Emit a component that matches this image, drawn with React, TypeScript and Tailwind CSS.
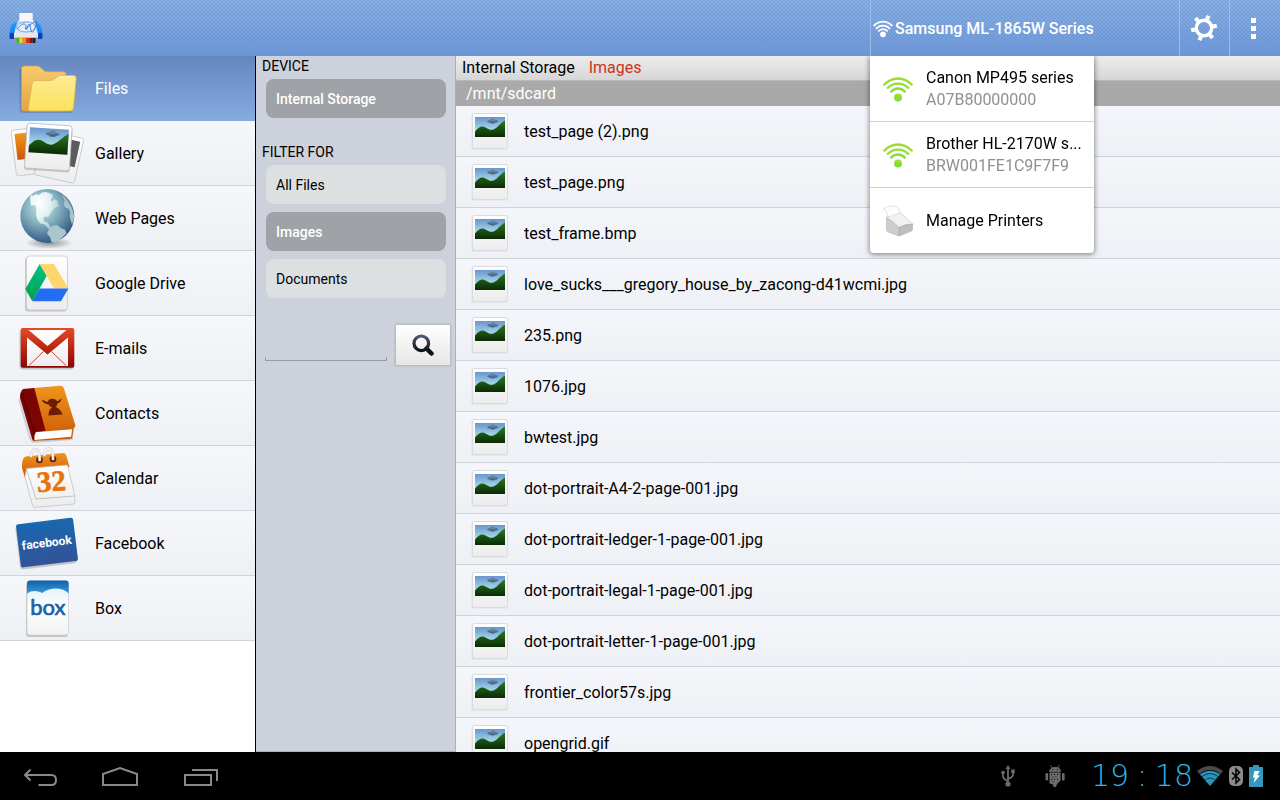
import React, { useState } from 'react';

interface IconProps {
  className?: string;
}

interface MenuEntry {
  id: string;
  label: string;
  icon: React.ReactNode;
}

interface Printer {
  name: string;
  serial: string;
}

// Gradients shared by all of the drawings below
function Gradients() {
  return (
    <svg className="absolute h-0 w-0" aria-hidden="true">
      <defs>
        <linearGradient id="g-sky" x1="0" y1="0" x2="0" y2="1">
          <stop offset="0" stopColor="#6a95cf" />
          <stop offset="0.65" stopColor="#a5dbe8" />
        </linearGradient>
        <linearGradient id="g-hill" x1="0" y1="0" x2="0" y2="1">
          <stop offset="0" stopColor="#2a7a22" />
          <stop offset="1" stopColor="#0b2a04" />
        </linearGradient>
        <linearGradient id="g-paper" x1="0" y1="0" x2="0" y2="1">
          <stop offset="0" stopColor="#ffffff" />
          <stop offset="1" stopColor="#ececec" />
        </linearGradient>
        <linearGradient id="g-folder-back" x1="0" y1="0" x2="0" y2="1">
          <stop offset="0" stopColor="#f6cd6c" />
          <stop offset="1" stopColor="#e7a148" />
        </linearGradient>
        <linearGradient id="g-folder-front" x1="0" y1="0" x2="0" y2="1">
          <stop offset="0" stopColor="#fdeb94" />
          <stop offset="1" stopColor="#fae35c" />
        </linearGradient>
        <linearGradient id="g-orange" x1="0" y1="0" x2="0" y2="1">
          <stop offset="0" stopColor="#ee961c" />
          <stop offset="1" stopColor="#cc5608" />
        </linearGradient>
        <linearGradient id="g-red" x1="0" y1="0" x2="0" y2="1">
          <stop offset="0" stopColor="#e64a26" />
          <stop offset="1" stopColor="#8b0500" />
        </linearGradient>
        <linearGradient id="g-green" x1="0" y1="0" x2="0" y2="1">
          <stop offset="0" stopColor="#00c28a" />
          <stop offset="1" stopColor="#00a049" />
        </linearGradient>
        <linearGradient id="g-facebook" x1="0" y1="0" x2="0" y2="1">
          <stop offset="0" stopColor="#1868b0" />
          <stop offset="1" stopColor="#325297" />
        </linearGradient>
        <linearGradient id="g-box" x1="0" y1="0" x2="0" y2="1">
          <stop offset="0" stopColor="#0c62ad" />
          <stop offset="1" stopColor="#3a9ad6" />
        </linearGradient>
        <linearGradient id="g-cloud" x1="0" y1="0" x2="0" y2="1">
          <stop offset="0" stopColor="#d8ecf3" />
          <stop offset="0.5" stopColor="#ffffff" />
          <stop offset="1" stopColor="#f1f1f1" />
        </linearGradient>
        <linearGradient id="g-signal" x1="0" y1="0" x2="0" y2="1">
          <stop offset="0" stopColor="#addd2c" />
          <stop offset="1" stopColor="#6fdc45" />
        </linearGradient>
        <linearGradient id="g-lens" x1="0" y1="0" x2="0" y2="1">
          <stop offset="0" stopColor="#4a5c6c" />
          <stop offset="1" stopColor="#0a0f14" />
        </linearGradient>
        <linearGradient id="g-blue-side" x1="0" y1="0" x2="0" y2="1">
          <stop offset="0" stopColor="#1c9dff" />
          <stop offset="0.6" stopColor="#1587f2" />
          <stop offset="0.7" stopColor="#0b3fb4" />
        </linearGradient>
        <radialGradient id="g-globe" cx="0.4" cy="0.33" r="0.7">
          <stop offset="0" stopColor="#c7ebe8" />
          <stop offset="0.45" stopColor="#84b0bf" />
          <stop offset="1" stopColor="#2c5580" />
        </radialGradient>
        <radialGradient id="g-land" cx="0.3" cy="0.3" r="0.8">
          <stop offset="0" stopColor="#ffffff" />
          <stop offset="0.5" stopColor="#e3f2f1" />
          <stop offset="1" stopColor="#a5c6cc" />
        </radialGradient>
        <radialGradient id="g-shadow">
          <stop offset="0" stopColor="#000" stopOpacity="0.4" />
          <stop offset="1" stopColor="#000" stopOpacity="0" />
        </radialGradient>
      </defs>
    </svg>
  );
}

// 30x20 picture of hills under a flying saucer
function Landscape() {
  return (
    <g>
      <rect width="30" height="20" fill="url(#g-sky)" />
      <path
        d="M0 14.500C4 9.500 7 8.600 10 10.200c3 1.600 4.500 3 7.500 2.600C22 12 25 6 30 3.500V20H0z"
        fill="url(#g-hill)"
      />
      <ellipse cx="17.700" cy="4.300" rx="5.400" ry="1.500" fill="#53708f" />
      <ellipse cx="17.700" cy="3" rx="2.600" ry="1.500" fill="#6482a0" />
      <ellipse cx="17.700" cy="5.600" rx="2.600" ry="0.900" fill="#466382" />
    </g>
  );
}

function EntryIcon({ children }: { children: React.ReactNode }) {
  return (
    <svg width="95" height="64" viewBox="0 0 95 64" className="shrink-0" aria-hidden="true">
      {children}
    </svg>
  );
}

function FolderIcon() {
  return (
    <EntryIcon>
      <path d="M20.500 13v40q0 3 3 3H72" fill="none" stroke="#000" strokeOpacity="0.15" strokeWidth="2" />
      <path
        d="M21.500 13q0-3 3-3H37q2 0 3.500 1.500l3 2.700q1.500 1.500 3.500 1.500h16q3 0 3 3V52q0 3-3 3H24.500q-3 0-3-3z"
        fill="url(#g-folder-back)"
        stroke="#dc9c3f"
        strokeWidth="0.800"
      />
      <path
        d="M32 28q.3-3 3-3h15q2 0 3.500-1.200l4-3Q59.500 19.500 61 19.500h12.500q3 0 2.700 3L73.500 52q-.4 3-3 3H30q-2 0-1.700-3z"
        fill="url(#g-folder-front)"
        stroke="#dfb13c"
        strokeWidth="0.800"
      />
      <path d="M33 27q.5-1.200 2-1.200h15.500q2 0 3.500-1.200l4-3q1.500-1.200 3-1.200h12.500" fill="none" stroke="#fff7c0" strokeWidth="0.700" />
    </EntryIcon>
  );
}

function GalleryIcon() {
  return (
    <EntryIcon>
      <g transform="translate(11 9.500) rotate(-7)">
        <rect width="40" height="46" rx="2.500" fill="url(#g-paper)" stroke="#c6c8ca" strokeWidth="0.900" />
        <rect x="3" y="4" width="30" height="26" fill="url(#g-orange)" />
      </g>
      <g transform="translate(44 8.700) rotate(12.500)">
        <rect width="41" height="46" rx="2.500" fill="url(#g-paper)" stroke="#c6c8ca" strokeWidth="0.900" />
        <rect x="8" y="4" width="30" height="26" fill="#5d5960" />
      </g>
      <g transform="translate(27.300 2) rotate(3.700)">
        <rect x="-0.500" y="0.800" width="46" height="46" rx="3" fill="#000" fillOpacity="0.180" />
        <rect width="45" height="45" rx="2.500" fill="url(#g-paper)" stroke="#bfc3c6" strokeWidth="0.900" />
        <g transform="translate(3 4) scale(1.300 1.260)">
          <Landscape />
        </g>
      </g>
    </EntryIcon>
  );
}

function GlobeIcon() {
  return (
    <EntryIcon>
      <ellipse cx="49" cy="57" rx="24" ry="6" fill="url(#g-shadow)" />
      <circle cx="47.300" cy="30" r="27" fill="url(#g-globe)" />
      <path
        d="M30 12l1-3 3 1 1-2 4 1 3-2.500 4-.5 3 1 3.500 1.500.5 2.500-2 2.500 1 2.500 2-3 3 1.500 1 3 .5 3-4 1.500-2 3-2.500 3-1.500 3-3-.5-2 1.500.5 3.500 3 .5 1.500 2 2 3 2.500 2-1 .8-4-1.800-3.500-3.500-4-1-3-3.500-1.500-5 .5-6-1.500-4-4 1z"
        fill="url(#g-land)"
      />
      <path
        d="M49.500 42l3.500-2.500 4.500-.2 3.500 3 4 1.500 1.500 3.500-3 3-3.500 3.500-2.500 2-3 .8-3-.5-1.500-5-3-3.500z"
        fill="#a8c6cb"
      />
      <path
        d="M62 9l3.500 3 2.500 3.500 3 4.500 2 5 1 5-.3 5-1.700 3-1.500-4-.8-4 .5-4-2-3.500-3-1-1.500-3.500 1-3.500z"
        fill="#a5c3c8"
      />
    </EntryIcon>
  );
}

function DriveIcon() {
  return (
    <EntryIcon>
      <rect x="25" y="6.500" width="42" height="54" rx="3" fill="#000" fillOpacity="0.180" />
      <rect x="26.500" y="5" width="41" height="54" rx="3" fill="url(#g-paper)" stroke="#c9ccd0" strokeWidth="0.900" />
      <path d="M39.700 13l7 12-14.400 25.300L25.300 38z" fill="url(#g-green)" />
      <path d="M39.700 13H54l14.400 24.500H54z" fill="#ffd66e" />
      <path d="M39.500 37.500h28.900L61 50.300H32.300z" fill="#216ef5" />
    </EntryIcon>
  );
}

function MailIcon() {
  return (
    <EntryIcon>
      <rect x="19.500" y="13.500" width="54" height="40" rx="3" fill="#000" fillOpacity="0.180" />
      <rect x="20.700" y="12" width="53.600" height="39.700" rx="2" fill="url(#g-red)" />
      <path d="M28.500 14h38L47.500 30z" fill="#fbfbfb" />
      <path d="M27 21.500L47.500 38.500 68 21.500V50H27z" fill="url(#g-paper)" />
      <path d="M43.500 35.500L29 49.500M51.500 35.500L66 49.500" stroke="#b93329" strokeWidth="0.900" fill="none" />
    </EntryIcon>
  );
}

function ContactsIcon() {
  return (
    <EntryIcon>
      <path d="M19 18l11 39 3 4 40-3" fill="none" stroke="#000" strokeOpacity="0.150" strokeWidth="2" />
      <path d="M34 7l26-2.200q3-.2 4 3L75.300 44q.5 2-1.500 3L72.500 56q-.5 2-2.500 2l-37 2-1-9z" fill="url(#g-orange)" />
      <path d="M35 51.300l37-3-.8 7.500L34 59z" fill="#ffffff" />
      <path
        d="M20 17q-.3-6 3-9l11.300-1L45.500 49.700 35.500 51q-1.800 3-1 8.800-1.500.2-2.500-2z"
        fill="#7c0503"
      />
      <path d="M22 12l13 41" stroke="#4d0000" strokeWidth="2" fill="none" strokeOpacity="0.600" />
      <path
        d="M41.500 18.500l6 2.500q1-3 4.500-3.300 3.500-.3 5.500 2.500l4-2.700q-.5 4-4 5-.5 2.500-2 3.500 5 1.500 7 7.500l-14 1q0-6 3.500-8-2.500-1-3.500-3-5-.5-7-5z"
        fill="#6d1c04"
      />
    </EntryIcon>
  );
}

function CalendarIcon() {
  return (
    <EntryIcon>
      <path d="M26 23l8 30-.7 8.300L25 31.500z" fill="#dadada" />
      <path d="M22 22q-.5-10 3.500-11.500L63 7q2.500 0 3.500 3l3 11L27 24l-2 8z" fill="url(#g-orange)" />
      <path d="M26.500 22.500l41-3.500L74.800 50v6q0 2-2 2.200L35 61.300q-2 0-2.500-2L25 31z" fill="url(#g-paper)" stroke="#bcbcbc" strokeWidth="0.700" />
      <path d="M26.500 23l9.500 30 38.500-3" fill="none" stroke="#bdbdbd" strokeWidth="0.900" />
      <circle cx="39.500" cy="14" r="3.300" fill="#6b1c05" />
      <circle cx="53" cy="13" r="3.300" fill="#6b1c05" />
      <path d="M31 10c1-9 9-10 8.700 4M44.500 9c1-9 9-9 8.500 4" fill="none" stroke="#c6c6c6" strokeWidth="3" strokeLinecap="round" />
      <path d="M31 10c1-9 9-10 8.700 4M44.500 9c1-9 9-9 8.500 4" fill="none" stroke="#f5f5f5" strokeWidth="2" strokeLinecap="round" />
      <text
        x="52"
        y="45"
        textAnchor="middle"
        transform="rotate(-4 52 45)"
        fontFamily="'Liberation Serif', serif"
        fontWeight="700"
        fontSize="29"
        stroke="#e5740f"
        strokeWidth="0.600"
        fill="#e5740f"
      >
        32
      </text>
    </EntryIcon>
  );
}

function FacebookIcon() {
  return (
    <EntryIcon>
      <g transform="translate(15.800 13.500) rotate(-7)">
        <rect x="-1" y="1.500" width="57.500" height="44" rx="3" fill="#000" fillOpacity="0.180" />
        <rect width="57.500" height="43.500" rx="2.500" fill="url(#g-facebook)" />
        <text
          x="28.500"
          y="26"
          textAnchor="middle"
          fontFamily="Roboto, sans-serif"
          fontWeight="700"
          fontSize="12"
          fill="#ffffff"
        >
          facebook
        </text>
      </g>
    </EntryIcon>
  );
}

function BoxIcon() {
  return (
    <EntryIcon>
      <rect x="26" y="6" width="42" height="55" rx="3" fill="#000" fillOpacity="0.180" />
      <rect x="27" y="5" width="41.500" height="54" rx="3" fill="url(#g-cloud)" stroke="#c9ccd0" strokeWidth="0.700" />
      <path d="M27 17.500V7.500q0-3 3-3h35.700q3 0 3 3v10q-5-5-13-5-8 0-13.500 4.500Q34 13 27 17.500z" fill="url(#g-box)" />
      <text
        x="47.800"
        y="39"
        textAnchor="middle"
        fontFamily="Lato, sans-serif"
        fontSize="22"
        stroke="#1763ab"
        strokeWidth="0.700"
        fill="#1763ab"
      >
        box
      </text>
    </EntryIcon>
  );
}

function LogoIcon() {
  return (
    <svg width="34" height="30" viewBox="0 0 34 30" aria-hidden="true">
      <path d="M9 9Q1.500 9 .5 20v4.500q0 1.500 1.500 1.500h6z" fill="url(#g-blue-side)" />
      <path d="M25 9q7.500 0 8.500 11v4.500q0 1.500-1.500 1.500h-6z" fill="url(#g-blue-side)" />
      <path d="M9.500 7.500h15l2 4L29 21H5l2.500-9.500z" fill="#dfe6ee" />
      <path d="M10.300 0h13.400v8H10.300z" fill="#f8f8f8" />
      <path d="M5 20h24v5q0 1-1 1H6q-1 0-1-1z" fill="#e8e8e8" />
      <path d="M5 24.500h24v.5q0 1-1 1H6q-1 0-1-1z" fill="#9a9a9a" />
      <ellipse cx="17" cy="14" rx="9.500" ry="5" fill="#e4eefb" stroke="#5b90e0" strokeWidth="0.800" />
      <path d="M8.500 16q4-6 7-5t1 4 6-4 4 3-5 1-4 2" fill="none" stroke="#3b78d8" strokeWidth="0.900" />
      <path d="M7.500 25h3v5h-3z" fill="#49b51c" />
      <path d="M10.500 25h3v5h-3z" fill="#e6e02a" />
      <path d="M13.500 25H17v5h-3.500z" fill="#f08a18" />
      <path d="M17 25h3.500v5H17z" fill="#d92b12" />
      <path d="M20.500 25h3v5h-3z" fill="#8c1410" />
      <path d="M23.500 25h3v5h-3z" fill="#222" />
    </svg>
  );
}

function SignalIcon({ className }: IconProps) {
  return (
    <svg viewBox="0 0 30 26" className={className} fill="none" stroke="currentColor" strokeWidth="2.800" aria-hidden="true">
      <path d="M1 8.500Q7.500 2 15 2t14 6.500" />
      <path d="M4.500 12.800Q9 8 15 8t10.500 4.800" />
      <path d="M8 16.500q3-3.300 7-3.300t7 3.300" />
      <circle cx="15" cy="21" r="4.300" fill="currentColor" stroke="none" />
    </svg>
  );
}

function GreenSignalIcon() {
  return (
    <svg width="30" height="26" viewBox="0 0 30 26" fill="none" aria-hidden="true">
      <g stroke="#9edc33" strokeWidth="2.300">
        <path d="M0.600 9.300Q7 2.500 15 2.500t14.400 6.800" />
        <path d="M4 12.500Q9 7.700 15 7.700t11 4.800" stroke="#97dc36" />
        <path d="M7.500 16.200Q11 12.500 15 12.500t7.500 3.700" stroke="#89dc3c" />
      </g>
      <circle cx="15" cy="21.500" r="4" fill="url(#g-signal)" />
    </svg>
  );
}

function GearIcon() {
  return (
    <svg width="28" height="28" viewBox="-14 -14 28 28" aria-hidden="true">
      <g fill="none" stroke="#fff">
        <circle r="7.700" strokeWidth="3.400" />
        <path
          d="M8.500-1.500l4.300-.8M5.800 6.800l2.700 3.200M-3 8.300l-1.500 4M-8.500 1.500l-4.300.8M-5.800-6.800l-2.700-3.200M3-8.300l1.500-4"
          strokeWidth="4"
        />
      </g>
    </svg>
  );
}

function PrinterIcon() {
  return (
    <svg width="30" height="32" viewBox="0 0 30 32" aria-hidden="true">
      <path d="M3.500 12.500q2-3.500 7-3.500l6-2 13 11.500q0 2-2.500 2l-9 2.500L16 23q-6-6-12.500-10.500z" fill="#f1f1f1" stroke="#c4c4c4" strokeWidth="0.600" />
      <path d="M16 22.500q6-4 13.500-3.500v5q0 1.500-1.500 2.300L16 31z" fill="#bfbfbf" stroke="#a5a5a5" strokeWidth="0.500" />
      <path d="M3.500 12.500Q11 17 16 22.500V31L5 27q-1.500-.7-1.500-2.500z" fill="#cdcdcd" stroke="#a5a5a5" strokeWidth="0.500" />
      <path d="M0.500 3.500q3-.5 4-2l9-.5q3 2.500 4 7L5 12q-.5-6-4.500-8.500z" fill="#fcfcfc" stroke="#cfcfcf" strokeWidth="0.600" />
    </svg>
  );
}

function Thumbnail() {
  return (
    <svg width="38" height="38" viewBox="0 0 38 38" className="shrink-0" aria-hidden="true">
      <rect x="0.500" y="2" width="36" height="35.500" rx="1.500" fill="#000" fillOpacity="0.080" />
      <rect x="1.500" y="1.500" width="35" height="35" rx="1.500" fill="url(#g-paper)" stroke="#dadcdf" />
      <g transform="translate(4 5)">
        <Landscape />
      </g>
    </svg>
  );
}

const entries: MenuEntry[] = [
  { id: 'files', label: 'Files', icon: <FolderIcon /> },
  { id: 'gallery', label: 'Gallery', icon: <GalleryIcon /> },
  { id: 'web', label: 'Web Pages', icon: <GlobeIcon /> },
  { id: 'drive', label: 'Google Drive', icon: <DriveIcon /> },
  { id: 'mail', label: 'E-mails', icon: <MailIcon /> },
  { id: 'contacts', label: 'Contacts', icon: <ContactsIcon /> },
  { id: 'calendar', label: 'Calendar', icon: <CalendarIcon /> },
  { id: 'facebook', label: 'Facebook', icon: <FacebookIcon /> },
  { id: 'box', label: 'Box', icon: <BoxIcon /> },
];

const files = [
  'test_page (2).png',
  'test_page.png',
  'test_frame.bmp',
  'love_sucks___gregory_house_by_zacong-d41wcmi.jpg',
  '235.png',
  '1076.jpg',
  'bwtest.jpg',
  'dot-portrait-A4-2-page-001.jpg',
  'dot-portrait-ledger-1-page-001.jpg',
  'dot-portrait-legal-1-page-001.jpg',
  'dot-portrait-letter-1-page-001.jpg',
  'frontier_color57s.jpg',
  'opengrid.gif',
];

const printers: Printer[] = [
  { name: 'Canon MP495 series', serial: 'A07B80000000' },
  { name: 'Brother HL-2170W s...', serial: 'BRW001FE1C9F7F9' },
];

const filters = ['All Files', 'Images', 'Documents'];

function Header() {
  const [open, setOpen] = useState(true);

  return (
    <header className="relative z-10 flex h-14 shrink-0 bg-[radial-gradient(circle,#4470b828_1px,transparent_1px),radial-gradient(circle,#4470b828_1px,transparent_1px),linear-gradient(#88b0e4,#6f98d8)] bg-[size:4px_4px,4px_4px,100%_100%] bg-[position:0_0,2px_2px,0_0] text-white">
      <div className="flex items-center pl-[9px]">
        <LogoIcon />
      </div>
      <div className="relative ml-auto w-[309px] border-l border-[#9bbbea]">
        <button
          type="button"
          aria-expanded={open}
          onClick={() => setOpen(!open)}
          className="flex h-full w-full items-center gap-0.5 pt-px pl-0.5 text-left font-medium"
        >
          <SignalIcon className="h-[18px] w-5" />
          <span>Samsung ML-1865W Series</span>
        </button>
        {open && (
          <ul className="absolute top-full -left-px w-56 rounded-b-sm bg-white text-black shadow-[0_1px_5px_1px_rgba(0,0,0,0.4)] [clip-path:inset(0_-10px_-10px_-10px)]">
            {printers.map((printer) => (
              <li key={printer.serial} className="border-b border-[#d0d0d0]">
                <button type="button" className="flex h-[65px] w-full items-center gap-[13px] pl-[13px] text-left">
                  <GreenSignalIcon />
                  <span className="min-w-0 flex-1 leading-[22px]">
                    <span className="block whitespace-nowrap">{printer.name}</span>
                    <span className="block text-[#909090]">{printer.serial}</span>
                  </span>
                </button>
              </li>
            ))}
            <li>
              <button type="button" className="flex h-[65px] w-full items-center gap-[13px] pl-[13px] text-left">
                <PrinterIcon />
                Manage Printers
              </button>
            </li>
          </ul>
        )}
      </div>
      <button type="button" aria-label="Settings" className="flex w-[50px] items-center justify-center border-l border-[#9bbbea] pr-px">
        <GearIcon />
      </button>
      <button
        type="button"
        aria-label="More options"
        className="flex w-[51px] flex-col items-center justify-center gap-[3px] border-l border-[#9bbbea] pr-[3px]"
      >
        <span className="h-[5px] w-[5px] bg-white" />
        <span className="h-[5px] w-[5px] bg-white" />
        <span className="h-[5px] w-[5px] bg-white" />
      </button>
    </header>
  );
}

function Sidebar() {
  const [selected, setSelected] = useState('files');

  return (
    <nav className="w-64 shrink-0 border-r border-black bg-white">
      {entries.map((entry) => (
        <button
          key={entry.id}
          type="button"
          onClick={() => setSelected(entry.id)}
          className={
            entry.id === selected
              ? 'flex h-[65px] w-full items-center border-b border-[#85abe1] bg-linear-to-b from-[#6587bd] to-[#85abe1] text-left text-white'
              : 'flex h-[65px] w-full items-center border-b border-[#d0d3d8] bg-linear-to-b from-[#f6f7fb] to-[#edf0f4] text-left'
          }
        >
          {entry.icon}
          <span className="pt-0.5">{entry.label}</span>
        </button>
      ))}
    </nav>
  );
}

function FilterButton({ label, active, onClick }: { label: string; active: boolean; onClick?: () => void }) {
  return (
    <button
      type="button"
      aria-pressed={active}
      onClick={onClick}
      className={
        active
          ? 'h-[39px] w-full rounded-lg bg-[#9fa2a6] px-[10px] text-left font-medium text-white'
          : 'h-[39px] w-full rounded-lg bg-[#dce0e1] px-[10px] text-left'
      }
    >
      {label}
    </button>
  );
}

function FilterPanel() {
  const [filter, setFilter] = useState('Images');

  return (
    <aside className="w-[200px] shrink-0 border-r border-b border-[#aaafc1] bg-[#cdd1db] text-sm leading-5">
      <h2 className="px-1.5 pb-[3px]">DEVICE</h2>
      <div className="pr-[9px] pl-[10px]">
        <FilterButton label="Internal Storage" active />
      </div>
      <h2 className="px-1.5 pt-6 pb-[3px]">FILTER FOR</h2>
      <div className="flex flex-col gap-2 pr-[9px] pl-[10px]">
        {filters.map((name) => (
          <FilterButton key={name} label={name} active={name === filter} onClick={() => setFilter(name)} />
        ))}
      </div>
      <form className="mt-[27px] flex items-center gap-[9px] pr-[5px] pl-[9px]" onSubmit={(e) => e.preventDefault()}>
        <div className="flex h-[31px] min-w-0 flex-1 flex-col justify-end">
          <input type="text" aria-label="Search files" className="h-6 min-w-0 bg-transparent px-2 outline-none" />
          <div className="h-1 border-x border-b border-[#999da6]" />
        </div>
        <button
          type="submit"
          aria-label="Search"
          className="flex h-10 w-[54px] items-center justify-center bg-linear-to-b from-white to-[#e6e6e6] shadow-[0_0_2px_1px_rgba(0,0,0,0.15)]"
        >
          <svg width="22" height="22" viewBox="0 0 22 22" fill="none" aria-hidden="true">
            <path d="M14.500 14.500l5 5" stroke="#0c1116" strokeWidth="4.500" strokeLinecap="round" />
            <circle cx="9.300" cy="9.300" r="7.300" stroke="url(#g-lens)" strokeWidth="3.200" />
          </svg>
        </button>
      </form>
    </aside>
  );
}

function FileList() {
  return (
    <main className="flex min-w-0 flex-1 flex-col">
      <nav className="flex h-[25px] shrink-0 items-center gap-[14px] border-b border-[#b8b8b8] bg-linear-to-b from-[#ededed] to-[#d6d6d6] px-1.5">
        <a href="#storage">Internal Storage</a>
        <a href="#images" className="text-[#c8371b]">
          Images
        </a>
      </nav>
      <p className="h-[25px] shrink-0 bg-[#a9a9a9] px-[10px] leading-[25px] text-white">/mnt/sdcard</p>
      <ul className="min-h-0 flex-1 overflow-y-auto [scrollbar-width:none]">
        {files.map((file) => (
          <li key={file} className="border-b border-[#d0d3d8] bg-linear-to-b from-[#f5f6fb] to-[#edf0f4]">
            <button type="button" className="flex h-[50px] w-full items-center gap-[15px] pl-[15px] text-left">
              <Thumbnail />
              <span className="pt-0.5">{file}</span>
            </button>
          </li>
        ))}
      </ul>
    </main>
  );
}

function SystemBar() {
  return (
    <footer className="flex h-12 shrink-0 items-center bg-black pr-[17px] text-[#8a8a8a]">
      <button type="button" aria-label="Back">
        <svg width="80" height="48" viewBox="0 0 80 48" fill="none" stroke="currentColor" strokeWidth="2">
          <path d="M30.500 17.500L25 23l5.500 5.500M25 23h26.500q4.500 0 4.500 5t-4.500 5h-13" />
        </svg>
      </button>
      <button type="button" aria-label="Home">
        <svg width="80" height="48" viewBox="0 0 80 48" fill="none" stroke="currentColor" strokeWidth="2">
          <path d="M23 33V22l17-6 17 6v11z" />
        </svg>
      </button>
      <button type="button" aria-label="Recent apps">
        <svg width="80" height="48" viewBox="0 0 80 48" fill="none" stroke="currentColor" strokeWidth="2">
          <path d="M25 23h26v10H25zM32 18h25v11" />
        </svg>
      </button>
      <div className="ml-auto flex items-center">
        <svg width="14" height="22" viewBox="0 0 14 22" fill="none" stroke="#6c6c6c" strokeWidth="1.800" className="mr-[30px]" aria-hidden="true">
          <path d="M7 19V3M7 16q-5-2-5-5V8M7 14q5-2 5-4V6" />
          <path d="M4.500 4L7 0l2.500 4z" fill="#6c6c6c" stroke="none" />
          <circle cx="7" cy="19" r="2.600" fill="#6c6c6c" stroke="none" />
          <circle cx="2" cy="7.500" r="1.800" fill="#6c6c6c" stroke="none" />
          <path d="M10.200 4.500h3.600v3.600h-3.600z" fill="#6c6c6c" stroke="none" />
        </svg>
        <svg width="20" height="22" viewBox="0 0 20 22" fill="#6c6c6c" className="mr-[26px]" aria-hidden="true">
          <path d="M4.500 6.500Q5 2.500 10 2.300t5.500 4.200zM5.500 0l1.500 3M14.500 0L13 3" stroke="#6c6c6c" strokeWidth="0.800" />
          <path d="M4.500 7.500h11v8L12 19l-1 3H8.500l-.5-2.500-3.500-1z" />
          <rect x="0.500" y="8" width="2.600" height="7.500" rx="1.300" />
          <rect x="17" y="8" width="2.600" height="7.500" rx="1.300" />
          <g fill="#000">
            <rect x="6" y="9" width="1" height="1" />
            <rect x="9" y="9" width="1" height="1" />
            <rect x="12" y="9" width="1" height="1" />
            <rect x="7.500" y="11.500" width="1" height="1" />
            <rect x="10.500" y="11.500" width="1" height="1" />
            <rect x="6" y="14" width="1" height="1" />
            <rect x="9" y="14" width="1" height="1" />
            <rect x="12" y="14" width="1" height="1" />
            <rect x="7.500" y="16.500" width="1" height="1" />
            <circle cx="7.800" cy="4.800" r="0.600" />
            <circle cx="12.200" cy="4.800" r="0.600" />
          </g>
        </svg>
        <time className="flex w-[106px] justify-between pr-1 font-['DejaVu_Sans'] text-[30px] leading-8 font-extralight text-[#33b5e5]">
          <span>19</span>
          <span>:</span>
          <span>18</span>
        </time>
        <svg width="26" height="20" viewBox="0 0 26 20" fill="none" className="mr-1.5" aria-hidden="true">
          <path d="M0 5Q13-5 26 5l-2.500 3.200Q13 0 2.500 8.200z" fill="#4a4a4a" />
          <path d="M3 8.500q10-7.500 20 0L13 20z" fill="#2a94bd" />
          <path d="M5 10.500q8-6 16 0M8 14q5-4 10 0" stroke="#0b3a4e" strokeWidth="1" />
        </svg>
        <svg width="14" height="20" viewBox="0 0 14 20" fill="none" className="mr-1.5" aria-hidden="true">
          <rect width="14" height="20" rx="5" fill="#8a8a8a" />
          <path d="M3 6.500l7.500 7L7 17V3l3.500 3.500L3 13.500" stroke="#000" strokeWidth="1.500" />
        </svg>
        <svg width="14" height="22" viewBox="0 0 14 22" aria-hidden="true">
          <path d="M4 0h6v2h4v20H0V2h4z" fill="#3697bd" />
          <path d="M5.500 6h5L8.300 10.500H11L4.500 18 6 12.500H3.800z" fill="#fff" />
        </svg>
      </div>
    </footer>
  );
}

export default function App() {
  return (
    <div className="flex h-screen flex-col overflow-hidden font-[Roboto,sans-serif] text-base text-black">
      <Gradients />
      <Header />
      <div className="flex min-h-0 flex-1">
        <Sidebar />
        <FilterPanel />
        <FileList />
      </div>
      <SystemBar />
    </div>
  );
}
